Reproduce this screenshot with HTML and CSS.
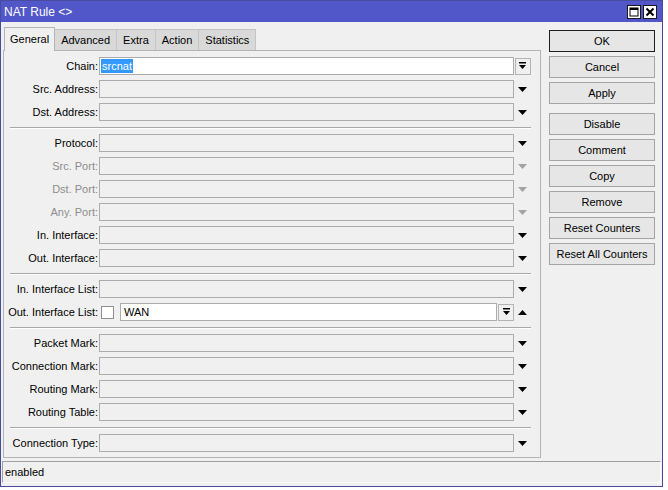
FILE: index.html
```html
<!DOCTYPE html>
<html>
<head>
<meta charset="utf-8">
<title>NAT Rule</title>
<link rel="stylesheet" href="styles.css">
</head>
<body>
<div class="window">
  <div class="titlebar">
    <span class="title">NAT Rule &lt;&gt;</span>
    <div class="tb-btns">
      <span class="tb-btn"><svg width="10" height="10" viewBox="0 0 10 10"><rect x="1" y="1" width="8" height="8" fill="none" stroke="#000" stroke-width="1"/><rect x="1" y="1" width="8" height="2" fill="#000"/></svg></span>
      <span class="tb-btn"><svg width="10" height="10" viewBox="0 0 10 10"><path d="M1.5 1.5L8.5 8.5M8.5 1.5L1.5 8.5" stroke="#000" stroke-width="2"/></svg></span>
    </div>
  </div>
  <div class="body">
    <div class="main">
      <div class="tabs">
        <span class="tab active">General</span>
        <span class="tab">Advanced</span>
        <span class="tab">Extra</span>
        <span class="tab">Action</span>
        <span class="tab">Statistics</span>
      </div>
      <div class="panel">
        <div class="row">
          <label class="lbl">Chain:</label>
          <div class="field white"><span class="sel">srcnat</span></div>
          <span class="slot"><span class="dd-btn"><svg width="7" height="8" viewBox="0 0 7 8"><rect x="0" y="0" width="7" height="1.5"/><path d="M0 3h7L3.5 7z"/></svg></span></span>
        </div>
        <div class="row">
          <label class="lbl">Src. Address:</label>
          <div class="field"></div>
          <span class="slot"><svg class="tri" width="9" height="5" viewBox="0 0 9 5"><path d="M0 0h9L4.5 5z"/></svg></span>
        </div>
        <div class="row">
          <label class="lbl">Dst. Address:</label>
          <div class="field"></div>
          <span class="slot"><svg class="tri" width="9" height="5" viewBox="0 0 9 5"><path d="M0 0h9L4.5 5z"/></svg></span>
        </div>
        <div class="sep"></div>
        <div class="row">
          <label class="lbl">Protocol:</label>
          <div class="field"></div>
          <span class="slot"><svg class="tri" width="9" height="5" viewBox="0 0 9 5"><path d="M0 0h9L4.5 5z"/></svg></span>
        </div>
        <div class="row disabled">
          <label class="lbl">Src. Port:</label>
          <div class="field"></div>
          <span class="slot"><svg class="tri" width="9" height="5" viewBox="0 0 9 5"><path d="M0 0h9L4.5 5z"/></svg></span>
        </div>
        <div class="row disabled">
          <label class="lbl">Dst. Port:</label>
          <div class="field"></div>
          <span class="slot"><svg class="tri" width="9" height="5" viewBox="0 0 9 5"><path d="M0 0h9L4.5 5z"/></svg></span>
        </div>
        <div class="row disabled">
          <label class="lbl">Any. Port:</label>
          <div class="field"></div>
          <span class="slot"><svg class="tri" width="9" height="5" viewBox="0 0 9 5"><path d="M0 0h9L4.5 5z"/></svg></span>
        </div>
        <div class="row">
          <label class="lbl">In. Interface:</label>
          <div class="field"></div>
          <span class="slot"><svg class="tri" width="9" height="5" viewBox="0 0 9 5"><path d="M0 0h9L4.5 5z"/></svg></span>
        </div>
        <div class="row">
          <label class="lbl">Out. Interface:</label>
          <div class="field"></div>
          <span class="slot"><svg class="tri" width="9" height="5" viewBox="0 0 9 5"><path d="M0 0h9L4.5 5z"/></svg></span>
        </div>
        <div class="sep"></div>
        <div class="row">
          <label class="lbl">In. Interface List:</label>
          <div class="field"></div>
          <span class="slot"><svg class="tri" width="9" height="5" viewBox="0 0 9 5"><path d="M0 0h9L4.5 5z"/></svg></span>
        </div>
        <div class="row">
          <label class="lbl">Out. Interface List:</label>
          <span class="check"></span>
          <div class="field white wan">WAN</div>
          <span class="dd-btn inline"><svg width="7" height="8" viewBox="0 0 7 8"><rect x="0" y="0" width="7" height="1.5"/><path d="M0 3h7L3.5 7z"/></svg></span>
          <span class="slot"><svg class="tri" width="9" height="5" viewBox="0 0 9 5"><path d="M0 5h9L4.5 0z"/></svg></span>
        </div>
        <div class="sep"></div>
        <div class="row">
          <label class="lbl">Packet Mark:</label>
          <div class="field"></div>
          <span class="slot"><svg class="tri" width="9" height="5" viewBox="0 0 9 5"><path d="M0 0h9L4.5 5z"/></svg></span>
        </div>
        <div class="row">
          <label class="lbl">Connection Mark:</label>
          <div class="field"></div>
          <span class="slot"><svg class="tri" width="9" height="5" viewBox="0 0 9 5"><path d="M0 0h9L4.5 5z"/></svg></span>
        </div>
        <div class="row">
          <label class="lbl">Routing Mark:</label>
          <div class="field"></div>
          <span class="slot"><svg class="tri" width="9" height="5" viewBox="0 0 9 5"><path d="M0 0h9L4.5 5z"/></svg></span>
        </div>
        <div class="row">
          <label class="lbl">Routing Table:</label>
          <div class="field"></div>
          <span class="slot"><svg class="tri" width="9" height="5" viewBox="0 0 9 5"><path d="M0 0h9L4.5 5z"/></svg></span>
        </div>
        <div class="sep"></div>
        <div class="row">
          <label class="lbl">Connection Type:</label>
          <div class="field"></div>
          <span class="slot"><svg class="tri" width="9" height="5" viewBox="0 0 9 5"><path d="M0 0h9L4.5 5z"/></svg></span>
        </div>
      </div>
    </div>
    <div class="side">
      <button class="btn default">OK</button>
      <button class="btn">Cancel</button>
      <button class="btn">Apply</button>
      <button class="btn group">Disable</button>
      <button class="btn">Comment</button>
      <button class="btn">Copy</button>
      <button class="btn">Remove</button>
      <button class="btn">Reset Counters</button>
      <button class="btn">Reset All Counters</button>
    </div>
  </div>
  <div class="status">enabled</div>
</div>
</body>
</html>
```
FILE: styles.css
```css
html, body {
  margin: 0;
  padding: 0;
  background: #ffffff;
}
body {
  font-family: "Liberation Sans", Arial, sans-serif;
  font-size: 11px;
  color: #000;
}
.window {
  width: 661px;
  border: 1px solid #474c9e;
  background: #f0f0f0;
  display: flex;
  flex-direction: column;
  padding-bottom: 3px;
}
.titlebar {
  height: 21px;
  background: #5157c8;
  color: #fff;
  display: flex;
  align-items: center;
  justify-content: space-between;
  padding: 0 5px 0 3px;
  font-size: 12px;
}
.tb-btns {
  display: flex;
  gap: 2px;
}
.tb-btn {
  width: 12px;
  height: 12px;
  background: #fff;
  border: 1px solid #1a1a1a;
  display: flex;
  align-items: center;
  justify-content: center;
}
.body {
  display: flex;
  padding: 5px 0 0 2px;
}
.main {
  width: 538px;
  display: flex;
  flex-direction: column;
}
.tabs {
  display: flex;
  align-items: flex-end;
  height: 23px;
  padding-left: 1px;
}
.tab {
  height: 20px;
  line-height: 20px;
  padding: 0 6px;
  background: #d9d9d9;
  border: 1px solid #c4c4c4;
  border-bottom: none;
  margin-left: -1px;
}
.tab:first-child {
  margin-left: 0;
}
.tab.active {
  height: 23px;
  line-height: 22px;
  background: #f0f0f0;
  border-color: #b4b4b4;
  margin-bottom: -1px;
  position: relative;
  z-index: 1;
  padding: 0 5px 0 5px;
}
.panel {
  border: 1px solid #b4b4b4;
  padding: 6px 0 5px 0;
  display: flex;
  flex-direction: column;
  gap: 5px;
}
.row {
  display: flex;
  align-items: center;
  height: 18px;
}
.lbl {
  width: 94px;
  text-align: right;
  white-space: nowrap;
  margin-right: 1px;
}
.row.disabled .lbl {
  color: #8d8d8d;
}
.row.disabled .tri {
  fill: #a3a3a3;
}
.field {
  flex: 1;
  height: 16px;
  border: 1px solid #acacac;
  background: #f0f0f0;
  display: flex;
  align-items: center;
  padding-left: 1px;
}
.field.white {
  background: #fff;
}
.field.wan {
  padding-left: 3px;
}
.sel {
  background: #3399ff;
  color: #fff;
  padding: 0 1px;
  line-height: 14px;
}
.slot {
  width: 17px;
  margin-right: 9px;
  display: flex;
  align-items: center;
  justify-content: center;
}
.tri {
  fill: #000;
}
.dd-btn {
  width: 14px;
  height: 15px;
  border: 1px solid #b4b4b4;
  background: #f0f0f0;
  display: flex;
  align-items: center;
  justify-content: center;
}
.dd-btn.inline {
  margin-left: 1px;
}
.check {
  width: 11px;
  height: 11px;
  border: 1px solid #8f8f8f;
  background: #fff;
  margin: 0 6px 0 2px;
}
.sep {
  height: 3px;
  margin: 0 9px 0 6px;
  display: flex;
  align-items: center;
}
.sep::before {
  content: "";
  flex: 1;
  height: 1px;
  background: #a8a8a8;
  box-shadow: 0 1px 0 #ffffff;
}
.side {
  display: flex;
  flex-direction: column;
  gap: 4px;
  margin-left: 8px;
  padding-top: 3px;
}
.btn {
  width: 106px;
  height: 22px;
  font-family: inherit;
  font-size: 11px;
  color: #000;
  background: #e6e6e6;
  border: 1px solid #a5a5a5;
  padding: 0;
  margin: 0;
}
.btn.default {
  border-color: #1f1f1f;
}
.btn.group {
  margin-top: 5px;
}
.status {
  margin: 3px 1px 0 1px;
  height: 20px;
  border-top: 1px solid #a0a0a0;
  border-left: 1px solid #a0a0a0;
  border-right: 1px solid #ffffff;
  border-bottom: 1px solid #ffffff;
  display: flex;
  align-items: center;
  padding-left: 2px;
}
```
